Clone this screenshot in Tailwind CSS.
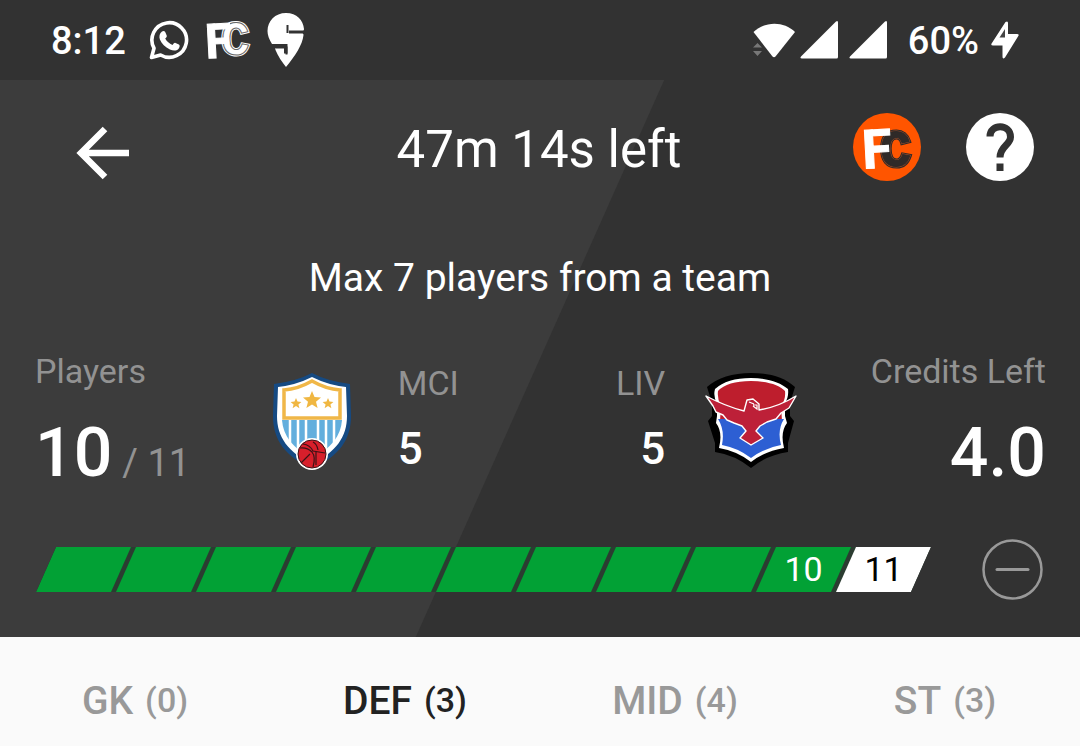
<!DOCTYPE html>
<html lang="en">
<head>
  <meta charset="UTF-8"/>
  <meta name="viewport" content="width=device-width, initial-scale=1.0"/>
  <title>Create Team – MCI vs LIV</title>
  <script src="https://cdn.jsdelivr.net/npm/@tailwindcss/browser@4"></script>
</head>
<body class="bg-[#fafafa] font-[Roboto,sans-serif]">

  <!-- Phone status bar -->
  <div class="bg-[#323232] text-white h-20 pl-[51px] pr-[61px] flex items-center justify-between text-[38px] leading-10 font-medium">
    <div class="flex items-center">
      <span class="pt-px">8:12</span>
      <svg class="w-10 h-10 ml-[23px]" viewBox="0 0 40 40" fill="none">
        <path d="M2.500 37.500 L5 28.200 A17.300 17.300 0 1 1 11.600 35 Z" stroke="#fff" stroke-width="3.600" stroke-linejoin="round"/>
        <path d="M13 11.500c1-.9 2.600-.8 3.200.4l1.500 3.500c.4 1-.2 1.800-1.500 3.200 1.800 3.200 4 5 7.300 6.300 1.400-1.800 2-2.400 3-2l3.400 1.700c1.300.7.8 3-.5 4.300-2 1.900-5 2-8.500.5-4.700-2-8.300-5.700-10-9.800-1.100-3-.3-6.300 2.100-8.100z" fill="#fff"/>
      </svg>
      <svg class="w-16 h-20 ml-2" viewBox="0 0 64 80">
        <g font-family="Liberation Mono, monospace" font-weight="700" font-size="48">
          <text x="24" y="55" fill="#fff" stroke="#fff" stroke-width="3">C</text>
          <text x="24" y="55" fill="#fff" stroke="#666" stroke-width="1">C</text>
        </g>
        <text x="8" y="58" font-family="Roboto, sans-serif" font-weight="700" font-size="48" fill="#fff" stroke="#fff" stroke-width="1" transform="rotate(-3 20 40)">F</text>
      </svg>
      <svg class="w-[38px] h-[54px] ml-[6px]" viewBox="0 0 38 54">
        <path d="M19 0C30 0 36 7 37 16c0 1-.5 1.500-1.500 1.500H22v3h13c1 0 1.500.5 1.500 1.500C35.500 32 28 43 19 54 15 49 11 43 8.500 37c-.5-1.500 0-2 1-2h7.500v5.500h3.500V31H5C2 26 .5 22 .5 18 .5 8 8 0 19 0z" fill="#fff"/>
        <path d="M20.500 20v-8M9 34.500h10.500v7" stroke="#323232" stroke-width="2" fill="none"/>
      </svg>
    </div>
    <div class="flex items-center">
      <svg class="w-[43px] h-10" viewBox="0 0 43 40">
        <path d="M.5 12C12 1 31 1 42 12L22.500 36.500q-1.500 1.500-3 0z" fill="#fff"/>
        <path d="M0 27.500h9L4.500 23zM0 31h9l-4.500 5z" fill="#777"/>
      </svg>
      <svg class="w-[39px] h-10 ml-1" viewBox="0 0 39 40"><path d="M36 1.500q2-1.500 2 1V37q0 1.500-1.500 1.500H2q-2.500 0-1-2z" fill="#fff"/></svg>
      <svg class="w-[39px] h-10 ml-[10px]" viewBox="0 0 39 40"><path d="M36 1.500q2-1.500 2 1V37q0 1.500-1.500 1.500H2q-2.500 0-1-2z" fill="#fff"/></svg>
      <span class="ml-5 pt-px">60%</span>
      <svg class="w-7 h-10 ml-3" viewBox="0 0 28 40">
        <path d="M14.500 2Q17 .5 17 3v11h9q2.500 0 1.300 2L14 37.500q-2.500 2.500-2.500-1V25.500H2Q-.5 25.500.6 23.500z" fill="#fff"/>
        <path d="M14 9v8.500H8.500z" fill="#444"/>
      </svg>
    </div>
  </div>

  <!-- Contest header -->
  <header class="relative bg-[#323232] text-white pb-[37px]">
    <div class="absolute inset-0 bg-[#3c3c3c] [clip-path:polygon(0_0,61.5%_0,38.5%_100%,0_100%)]"></div>

    <div class="relative">
      <!-- Back, timer, help -->
      <div class="grid grid-cols-[1fr_auto_1fr] items-start pt-[33px] pl-[74px] pr-[46px]">
        <button type="button" aria-label="Back" class="justify-self-start pt-3">
          <svg class="w-14 h-14" viewBox="0 0 56 56" fill="none" stroke="#fff" stroke-width="6.500"><path d="M55 28H8M31 4L7 28l24 24"/></svg>
        </button>
        <h1 class="text-[51px] leading-[74px] -ml-[30px]">47m 14s left</h1>
        <div class="flex justify-end gap-[45px]">
          <a href="#" aria-label="FC home">
            <svg class="w-[68px] h-[68px]" viewBox="0 0 68 68">
              <circle cx="34" cy="34" r="34" fill="#ff5500"/>
              <g font-family="Liberation Mono, monospace" font-weight="700" font-size="52">
                <text x="27" y="53" fill="#2f2a28" stroke="#2f2a28" stroke-width="4">C</text>
                <text x="27" y="53" fill="#2f2a28" stroke="#9a4a28" stroke-width="2">C</text>
                <text x="27" y="53" fill="#2f2a28" stroke="#2f2a28" stroke-width="1">C</text>
              </g>
              <text x="9" y="55" font-family="Roboto, sans-serif" font-weight="700" font-size="54" fill="#fff" stroke="#fff" stroke-width="1" transform="rotate(-3 24 34)">F</text>
            </svg>
          </a>
          <button type="button" aria-label="Help" class="size-[68px] rounded-full bg-white text-[#323232]">
            <svg class="size-full" viewBox="0 0 68 68" fill="none" stroke="currentColor" stroke-width="7">
              <path d="M24 23.500C24 10.500 44.500 10.500 44.500 24 44.500 32 34 33 34 44.500M34 50.500V58"/>
            </svg>
          </button>
        </div>
      </div>

      <p class="text-center text-[39px] leading-[48px] mt-[67px]">Max 7 players from a team</p>

      <!-- Players, teams and credits -->
      <div class="grid grid-cols-[238fr_267fr_258fr_249fr] mt-[49px] pl-[35px] pr-[34px]">
        <div>
          <div class="text-[34px] leading-10 text-[#929292]">Players</div>
          <div class="flex items-baseline mt-[22px]">
            <span class="text-[68px] leading-[80px] font-medium">10</span>
            <span class="text-[38px] text-[#929292] ml-[10px]">/ 11</span>
          </div>
        </div>

        <div class="flex gap-[47px] pt-3">
          <svg class="w-[78px] h-[100px] mt-[9px]" viewBox="0 0 78 100">
            <path d="M39 1Q54 9 77 12L78 44C78 68 66 84 39 97 12 84 0 68 0 44L1 12Q24 9 39 1z" fill="#164a82"/>
            <path d="M39 5Q55 13 73 15L74 44C74 65 63 80 39 92 15 80 4 65 4 44L5 15Q23 13 39 5z" fill="#fff"/>
            <path d="M9 48h60C68 64 58 76 39 87 20 76 10 64 9 48z" fill="#63aedd"/>
            <path d="M17 48v26M25 48v32M33 48v38M45 48v38M53 48v32M61 48v26" stroke="#fff" stroke-width="2.500"/>
            <path d="M39 9Q53 17 67 18V46H11V18Q25 17 39 9z" fill="#fff" stroke="#f0b748" stroke-width="3.500"/>
            <g fill="#f0b742">
              <path d="M39 19l2.500 6 6.500.5-5 4.200 1.600 6.300-5.600-3.500-5.600 3.500 1.600-6.300-5-4.200 6.500-.5z"/>
              <path d="M23 26l1.500 3.600 3.900.3-3 2.500 1 3.800-3.400-2.100-3.400 2.100 1-3.800-3-2.500 3.900-.3zM55 26l1.500 3.600 3.900.3-3 2.500 1 3.800-3.400-2.100-3.400 2.100 1-3.800-3-2.500 3.900-.3z"/>
            </g>
            <circle cx="39" cy="82" r="16" fill="#fff"/>
            <circle cx="39" cy="82" r="14" fill="#d71f2b" stroke="#3b1316" stroke-width="1"/>
            <path d="M27 76q7-1 12 4 4 5 1 15M30 72q7 1 10 7l12 2M37 82l-9 9M40 70q4 2 5 8M43 80v13" fill="none" stroke="#3b1316" stroke-width="1.200"/>
          </svg>
          <div>
            <div class="text-[34px] leading-10 text-[#929292]">MCI</div>
            <div class="text-[44px] leading-[52px] font-medium mt-5">5</div>
          </div>
        </div>

        <div class="flex justify-end gap-10 pt-3 text-right">
          <div>
            <div class="text-[34px] leading-10 text-[#929292]">LIV</div>
            <div class="text-[44px] leading-[52px] font-medium mt-5">5</div>
          </div>
          <svg class="w-[92px] h-[96px] mt-[9px]" viewBox="0 0 92 96">
            <path d="M46 1C64 1 79 5 90 15L85 31V44L89 49 83 71V80Q62 83 46 96 30 83 10 80V71L3 49 7 44V31L2 15Q18 1 46 1z" fill="#000"/>
            <path d="M46 6C61 6 75 10 83 17Q84 25 80 31V44L82 51Q75 60 79 76 60 79 46 90 32 79 14 76 18 60 11 51L12 44V31Q8 25 10 17 22 6 46 6z" fill="#fff"/>
            <path d="M46 9C62 9 75 13 80 19Q81 27 76 34L77 49 15 49 16 34Q12 27 13 19 22 9 46 9z" fill="#be1e2d"/>
            <path d="M13 47H79Q72 58 76 73 59 76 46 86 33 76 17 73 20 58 13 47z" fill="#2d5fd3"/>
            <path d="M1 24Q20 34 39 39L42 28 48 27 54 32V38Q73 35 91 24L84 36 76 41 71 47 62 50 55 54 51 59 58 66 46 73 35 66 41 59 37 54 29 51 22 48 18 43 11 40 8 34z" fill="#bd2038" stroke="#fff" stroke-width="1.400" stroke-linejoin="round"/>
            <path d="M44 30l5 2M48 33h4v4l-4-3" fill="none" stroke="#fff" stroke-width="1.200"/>
          </svg>
        </div>

        <div class="text-right">
          <div class="text-[34px] leading-10 text-[#929292]">Credits Left</div>
          <div class="text-[68px] leading-[80px] font-medium mt-[22px]">4.0</div>
        </div>
      </div>

      <!-- Selection progress -->
      <div class="flex items-center justify-between mt-[46px] pl-9 pr-[37px]">
        <ol class="flex-1 flex -space-x-[15px] h-[45px] mr-[51px] text-[34px] leading-[45px] text-center bg-[#2b3c31] [clip-path:polygon(20px_0,100%_0,calc(100%-20px)_100%,0_100%)]">
          <li class="flex-1 bg-[#02a135] [clip-path:polygon(20px_0,100%_0,calc(100%-20px)_100%,0_100%)]"></li>
          <li class="flex-1 bg-[#02a135] [clip-path:polygon(20px_0,100%_0,calc(100%-20px)_100%,0_100%)]"></li>
          <li class="flex-1 bg-[#02a135] [clip-path:polygon(20px_0,100%_0,calc(100%-20px)_100%,0_100%)]"></li>
          <li class="flex-1 bg-[#02a135] [clip-path:polygon(20px_0,100%_0,calc(100%-20px)_100%,0_100%)]"></li>
          <li class="flex-1 bg-[#02a135] [clip-path:polygon(20px_0,100%_0,calc(100%-20px)_100%,0_100%)]"></li>
          <li class="flex-1 bg-[#02a135] [clip-path:polygon(20px_0,100%_0,calc(100%-20px)_100%,0_100%)]"></li>
          <li class="flex-1 bg-[#02a135] [clip-path:polygon(20px_0,100%_0,calc(100%-20px)_100%,0_100%)]"></li>
          <li class="flex-1 bg-[#02a135] [clip-path:polygon(20px_0,100%_0,calc(100%-20px)_100%,0_100%)]"></li>
          <li class="flex-1 bg-[#02a135] [clip-path:polygon(20px_0,100%_0,calc(100%-20px)_100%,0_100%)]"></li>
          <li class="flex-1 bg-[#02a135] [clip-path:polygon(20px_0,100%_0,calc(100%-20px)_100%,0_100%)]">10</li>
          <li class="flex-1 bg-white text-black [clip-path:polygon(20px_0,100%_0,calc(100%-20px)_100%,0_100%)]">11</li>
        </ol>
        <button type="button" aria-label="Clear team">
          <svg class="w-[61px] h-[61px]" viewBox="0 0 61 61" fill="none" stroke="#999">
            <circle cx="30.500" cy="30.500" r="29" stroke-width="2.500"/>
            <path d="M15 30.500h31" stroke-width="3" stroke-linecap="round"/>
          </svg>
        </button>
      </div>
    </div>
  </header>

  <!-- Position tabs -->
  <nav class="grid grid-cols-4 pt-10 text-[39px] leading-[48px] font-medium text-[#999]">
    <a href="#gk" class="flex justify-center items-start gap-3">GK <span class="text-[34px] leading-[46px]">(0)</span></a>
    <a href="#def" class="flex justify-center items-start gap-3 text-[#222]">DEF <span class="text-[34px] leading-[46px]">(3)</span></a>
    <a href="#mid" class="flex justify-center items-start gap-3">MID <span class="text-[34px] leading-[46px]">(4)</span></a>
    <a href="#st" class="flex justify-center items-start gap-3">ST <span class="text-[34px] leading-[46px]">(3)</span></a>
  </nav>

</body>
</html>
